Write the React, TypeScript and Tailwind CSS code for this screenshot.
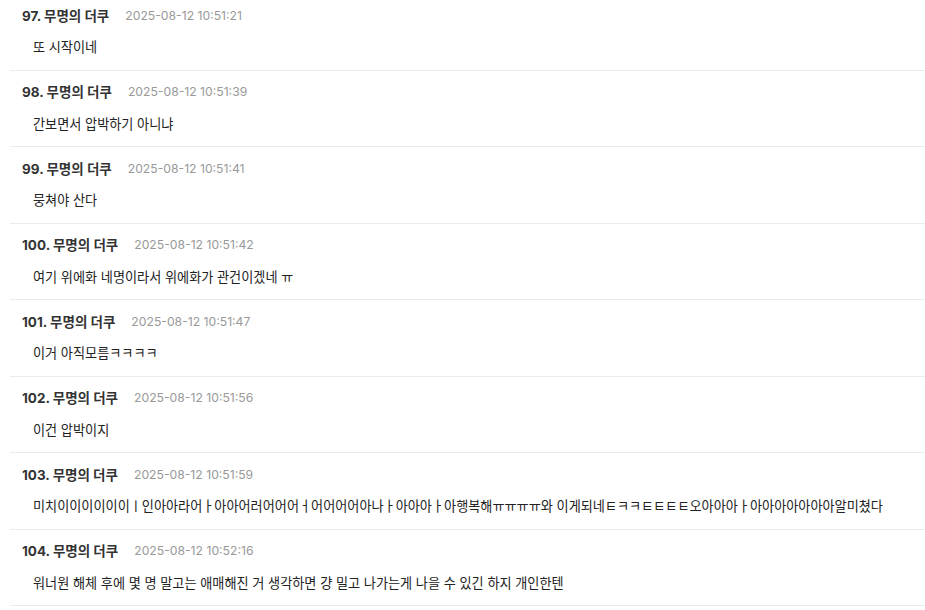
const comments = [
  { no: 97, time: "2025-08-12 10:51:21", text: "또 시작이네" },
  { no: 98, time: "2025-08-12 10:51:39", text: "간보면서 압박하기 아니냐" },
  { no: 99, time: "2025-08-12 10:51:41", text: "뭉쳐야 산다" },
  { no: 100, time: "2025-08-12 10:51:42", text: "여기 위에화 네명이라서 위에화가 관건이겠네 ㅠ" },
  { no: 101, time: "2025-08-12 10:51:47", text: "이거 아직모름ㅋㅋㅋㅋ" },
  { no: 102, time: "2025-08-12 10:51:56", text: "이건 압박이지" },
  {
    no: 103,
    time: "2025-08-12 10:51:59",
    text: "미치이이이이이이ㅣ인아아라어ㅏ아아어러어어어ㅓ어어어어아나ㅏ아아아ㅏ아행복해ㅠㅠㅠㅠ와 이게되네ㅌㅋㅋㅌㅌㅌㅌ오아아아ㅏ아아아아아아아알미쳤다",
  },
  {
    no: 104,
    time: "2025-08-12 10:52:16",
    text: "워너원 해체 후에 몇 명 말고는 애매해진 거 생각하면 걍 밀고 나가는게 나을 수 있긴 하지 개인한텐",
  },
];

export default function App() {
  return (
    <div className="h-[610px] overflow-hidden bg-white font-['Inter','Noto_Sans_CJK_KR',sans-serif]">
      <ul className="-mt-[6px] ml-[10px]">
        {comments.map((c) => (
          <li key={c.no} className="border-b border-[#ebebeb] pt-3 pb-[12.5px] pl-3">
            <div className="flex h-5 items-center gap-[16px]">
              <span className="text-[13.5px] font-bold text-[#333]">
                {c.no}. 무명의 더쿠
              </span>
              <span className="text-[12.2px] text-[#999]">{c.time}</span>
            </div>
            <p className="mt-[11px] h-5 pl-[11px] text-[13.15px] leading-5 text-[#222]">{c.text}</p>
          </li>
        ))}
      </ul>
    </div>
  );
}
